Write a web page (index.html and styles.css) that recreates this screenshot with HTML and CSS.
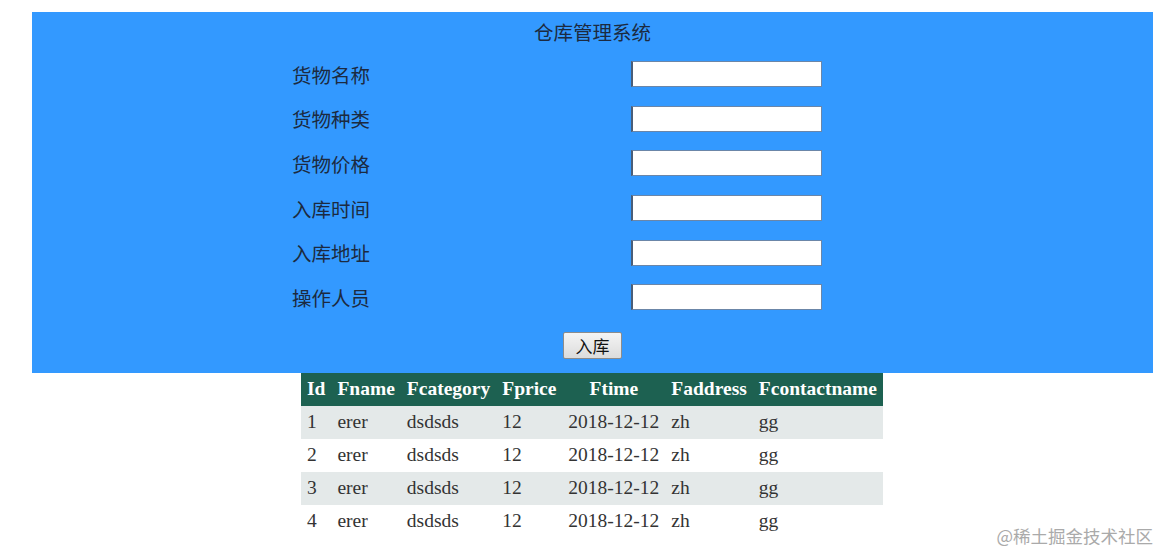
FILE: index.html
```html
<!DOCTYPE html>
<html lang="zh">
<head>
  <meta charset="UTF-8" />
  <title>仓库管理系统</title>
  <link rel="stylesheet" href="styles.css">
</head>
<body>
  <div class="panel">
    <div class="panel-title">仓库管理系统</div>
    <form class="goods-form">
      <label>货物名称</label><input type="text" />
      <label>货物种类</label><input type="text" />
      <label>货物价格</label><input type="text" />
      <label>入库时间</label><input type="text" />
      <label>入库地址</label><input type="text" />
      <label>操作人员</label><input type="text" />
    </form>
    <div class="actions">
      <button type="button">入库</button>
    </div>
  </div>

  <table class="goods-table">
    <thead>
      <tr>
        <th>Id</th><th>Fname</th><th>Fcategory</th><th>Fprice</th>
        <th>Ftime</th><th>Faddress</th><th>Fcontactname</th>
      </tr>
    </thead>
    <tbody>
      <tr><td>1</td><td>erer</td><td>dsdsds</td><td>12</td><td>2018-12-12</td><td>zh</td><td>gg</td></tr>
      <tr><td>2</td><td>erer</td><td>dsdsds</td><td>12</td><td>2018-12-12</td><td>zh</td><td>gg</td></tr>
      <tr><td>3</td><td>erer</td><td>dsdsds</td><td>12</td><td>2018-12-12</td><td>zh</td><td>gg</td></tr>
      <tr><td>4</td><td>erer</td><td>dsdsds</td><td>12</td><td>2018-12-12</td><td>zh</td><td>gg</td></tr>
    </tbody>
  </table>

  <div class="watermark">@稀土掘金技术社区</div>
</body>
</html>
```

FILE: styles.css
```css
body {
  margin: 0;
  padding: 12px 7px 0 32px;
  font-family: "Liberation Serif", "Noto Sans CJK SC", serif;
  color: #333;
  background: #fff;
}

.panel {
  background-color: #3399ff;
  padding: 7px 0 14px;
  font-family: "Noto Sans CJK SC", sans-serif;
}

.panel-title {
  text-align: center;
  font-size: 19.5px;
  line-height: 26px;
  color: #1c2a40;
}

.goods-form {
  display: grid;
  grid-template-columns: 339px 191px;
  grid-auto-rows: 44.6px;
  align-items: center;
  margin: 7px 0 0 260px;
}

.goods-form label {
  font-size: 19.5px;
  color: #1c2a40;
}

.goods-form input {
  box-sizing: border-box;
  width: 191px;
  height: 26px;
  margin: 0;
  border: 1px solid #6b86a8;
  border-left: 2px solid #4a5e78;
  background: #fff;
}

.actions {
  text-align: center;
  margin-top: 12px;
}

.actions button {
  box-sizing: border-box;
  width: 59px;
  height: 27px;
  font-family: "Noto Sans CJK SC", sans-serif;
  font-size: 17px;
  line-height: 1;
  color: #111;
  background: linear-gradient(#f4f4f4, #dcdcdc);
  border: 1px solid #8c8c8c;
  border-radius: 2px;
  padding: 0;
}

.goods-table {
  border-collapse: collapse;
  margin: 0 0 0 269px;
  font-size: 19.5px;
}

.goods-table th {
  background-color: #1d6151;
  color: #fff;
  height: 33px;
  padding: 0 6px;
  font-weight: bold;
}

.goods-table td {
  height: 33px;
  padding: 0 6px;
  color: #333;
}

.goods-table tbody tr:nth-child(odd) {
  background-color: #e4e9e9;
}

.watermark {
  position: absolute;
  right: 7px;
  top: 523px;
  font-family: "Noto Sans CJK SC", sans-serif;
  font-size: 17.5px;
  color: #aaa;
}
```
